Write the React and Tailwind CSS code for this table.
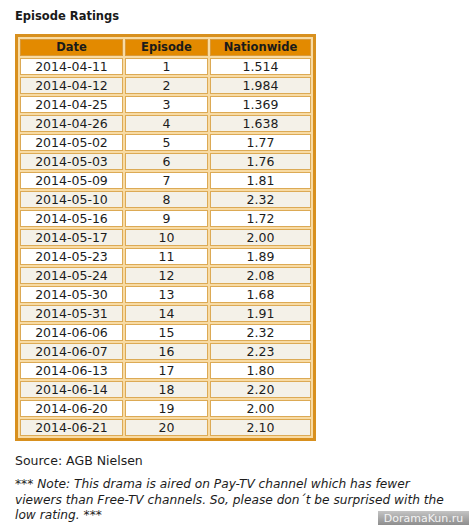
import React from 'react';

const rows = [
  ['2014-04-11', '1', '1.514'],
  ['2014-04-12', '2', '1.984'],
  ['2014-04-25', '3', '1.369'],
  ['2014-04-26', '4', '1.638'],
  ['2014-05-02', '5', '1.77'],
  ['2014-05-03', '6', '1.76'],
  ['2014-05-09', '7', '1.81'],
  ['2014-05-10', '8', '2.32'],
  ['2014-05-16', '9', '1.72'],
  ['2014-05-17', '10', '2.00'],
  ['2014-05-23', '11', '1.89'],
  ['2014-05-24', '12', '2.08'],
  ['2014-05-30', '13', '1.68'],
  ['2014-05-31', '14', '1.91'],
  ['2014-06-06', '15', '2.32'],
  ['2014-06-07', '16', '2.23'],
  ['2014-06-13', '17', '1.80'],
  ['2014-06-14', '18', '2.20'],
  ['2014-06-20', '19', '2.00'],
  ['2014-06-21', '20', '2.10'],
];

export default function App() {
  return (
    <div className="relative w-[469px] h-[526px] bg-white overflow-hidden text-[12.5px] text-[#1c1c1c] font-['DejaVu_Sans',Verdana,sans-serif]">
      <div className="pl-[15px] pt-[8px]">
        <h3 className="font-bold text-[11.5px] leading-[16px] text-[#1a1a1a]">Episode Ratings</h3>

        <table className="mt-[10px] w-[301px] border-separate border-spacing-[2px] border-[3px] border-[#d8901e] bg-[#f8dba4] text-center">
          <thead>
            <tr>
              <th className="w-[103px] h-[17px] p-0 leading-[15px] text-[11.5px] border border-[#d99a3a] bg-[#e38a00] font-bold text-[#1a1a1a]">Date</th>
              <th className="w-[83px] h-[17px] p-0 leading-[15px] text-[11.5px] border border-[#d99a3a] bg-[#e38a00] font-bold text-[#1a1a1a]">Episode</th>
              <th className="h-[17px] p-0 leading-[15px] text-[11.5px] border border-[#d99a3a] bg-[#e38a00] font-bold text-[#1a1a1a]">Nationwide</th>
            </tr>
          </thead>
          <tbody>
            {rows.map((r, i) => (
              <tr key={r[0]} className={i % 2 === 0 ? 'bg-white' : 'bg-[#f4f1e8]'}>
                {r.map((c, j) => (
                  <td key={j} className="h-[17px] p-0 leading-[15px] border border-[#dcaa55]">{c}</td>
                ))}
              </tr>
            ))}
          </tbody>
        </table>

        <p className="mt-[12px] leading-[16px]">Source: AGB Nielsen</p>

        <p className="mt-[8px] italic text-[12.2px] leading-[15.5px] whitespace-nowrap">
          *** Note: This drama is aired on Pay-TV channel which has fewer<br />
          viewers than Free-TV channels. So, please don´t be surprised with the<br />
          low rating. ***
        </p>
      </div>

      <div className="absolute right-0 bottom-[1px] w-[91px] h-[14px] flex items-center justify-center bg-gradient-to-b from-[#c4c4c4] to-[#8e8e8e] text-[#f4f4f4] text-[11px] leading-none">
        DoramaKun.ru
      </div>
    </div>
  );
}
